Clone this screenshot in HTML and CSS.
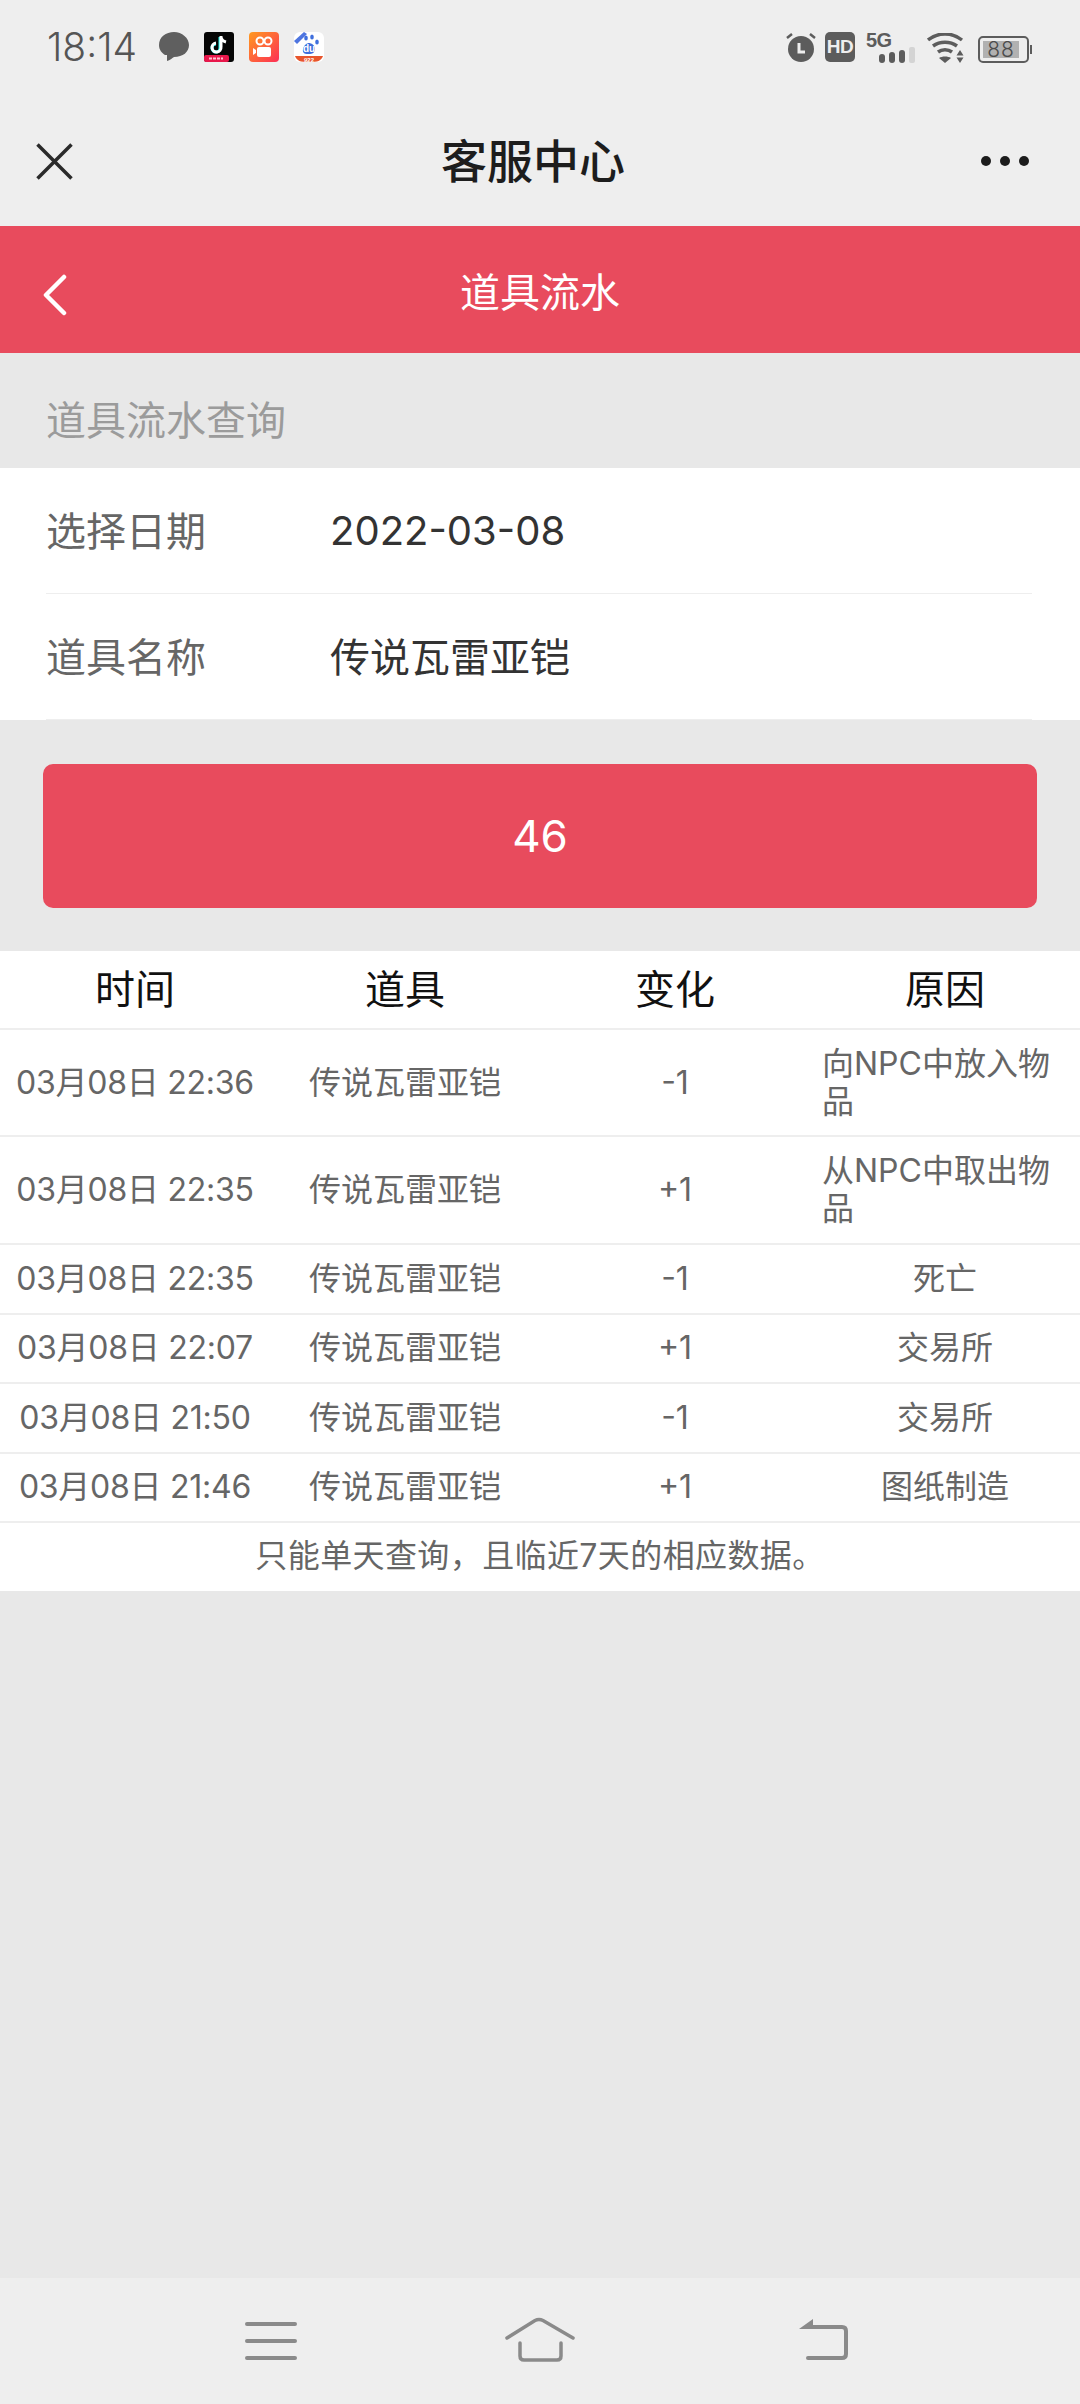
FILE: index.html
```html
<!DOCTYPE html>
<html lang="zh-CN">
<head>
<meta charset="utf-8">
<title>道具流水</title>
<link rel="stylesheet" href="styles.css">
</head>
<body>
<div class="screen">
  <header class="chrome">
    <div class="status">
      <div class="status-left">
        <span class="clock">18:14</span>
        <svg class="n-icon msg" viewBox="0 0 30 30"><path fill="#5f5f5f" d="M15 0C7 0 0 5 0 13c0 5 3 8 6 10l2 0 0 6c3-.5 5-3 7-4 9 0 15-5 15-12S23 0 15 0z"/></svg>
        <svg class="n-icon tiktok" viewBox="0 0 30 30"><rect width="30" height="30" rx="3" fill="#050505"/><rect y="23" width="25" height="7" rx="2" fill="#e8174b"/><path fill="none" stroke="#25f4ee" stroke-width="3" d="M16 5v11a4 4 0 1 1-4-4"/><path fill="none" stroke="#fff" stroke-width="3" d="M17 4v11a4.500 4.500 0 1 1-5-4M17 5c.5 3 3 4.500 5 5"/><path d="M5 26.500h14" stroke="#ffc2cf" stroke-width="2" stroke-dasharray="3 1"/></svg>
        <svg class="n-icon kuaishou" viewBox="0 0 30 30"><defs><linearGradient id="ks" x1="0" y1="0" x2="1" y2="1"><stop offset="0" stop-color="#ff9a1f"/><stop offset="1" stop-color="#fd2f55"/></linearGradient></defs><rect width="30" height="30" rx="4" fill="url(#ks)"/><circle cx="11" cy="9" r="3.500" fill="none" stroke="#fff" stroke-width="2"/><circle cx="19" cy="9" r="3.500" fill="none" stroke="#fff" stroke-width="2"/><rect x="8" y="15" width="14" height="10" rx="2" fill="#fff"/><path d="M7 18l-3-2v7l3-2z" fill="#fff"/></svg>
        <svg class="n-icon baidu" viewBox="0 0 30 30"><rect width="30" height="30" rx="6" fill="#fff"/><path d="M0 9L10 0 13 2 3 12z" fill="#4e75e0"/><g fill="#3f6fdd"><ellipse cx="12" cy="6" rx="1.800" ry="2.500"/><ellipse cx="18" cy="5" rx="1.800" ry="2.500"/><ellipse cx="23" cy="10" rx="1.800" ry="2.500"/><path d="M9 17c1-4 4-6 6-6s6 2 6 6-3 5-6 5-7 0-6-5z"/></g><text class="baidu-du" x="15" y="20">du</text><path d="M1 24h28c-2 5-5 6-14 6S3 29 1 24z" fill="#e8552c"/><text class="baidu-tag" x="15" y="29.500">922</text></svg>
      </div>
      <div class="status-right">
        <svg class="s-alarm" viewBox="0 0 30 30"><circle cx="15" cy="17" r="13" fill="#5c5c5c"/><path d="M1 6l5-4M29 6l-5-4" stroke="#5c5c5c" stroke-width="2.500"/><path d="M13 11v9h6" fill="none" stroke="#eee" stroke-width="3"/></svg>
        <span class="s-hd">HD</span>
        <div class="s-signal">
          <span class="s-5g">5G</span>
          <div class="bars"><i class="bar on b1"></i><i class="bar on b2"></i><i class="bar on b3"></i><i class="bar b4"></i></div>
        </div>
        <svg class="s-wifi" viewBox="0 0 38 30"><g fill="none" stroke="#5c5c5c" stroke-width="3.500"><path d="M1 7c10-8 24-8 34 0"/><path d="M6 13c7-5 17-5 24 0"/><path d="M11 19c4-3 10-3 14 0"/></g><path d="M18 30l-6-5c3-2 9-2 12 0z" fill="#5c5c5c"/><path d="M33 17l3.500 5.500h-7zM33 30l3.500-5.500h-7z" fill="#5c5c5c"/></svg>
        <div class="s-batt"><div class="batt-body"><span class="batt-fill">88</span></div><i class="batt-tip"></i></div>
      </div>
    </div>
    <div class="wx-nav">
      <svg class="wx-close" viewBox="0 0 37 37"><path d="M1.500 1.500l34 34M35.500 1.500l-34 34" fill="none" stroke="#2a2a2a" stroke-width="3.500"/></svg>
      <h1 class="wx-title">客服中心</h1>
      <div class="wx-more"><i></i><i></i><i></i></div>
    </div>
  </header>

  <section class="app-bar">
    <svg class="back" viewBox="0 0 24 42"><path d="M21 3L3 21l18 18" fill="none" stroke="#fff" stroke-width="4.500" stroke-linecap="round" stroke-linejoin="round"/></svg>
    <h2 class="app-title">道具流水</h2>
  </section>

  <main class="content">
    <div class="sec-title">道具流水查询</div>
    <div class="form">
      <div class="field"><span class="f-label">选择日期</span><span class="f-value">2022-03-08</span></div>
      <div class="field"><span class="f-label">道具名称</span><span class="f-value f-cjk">传说瓦雷亚铠</span></div>
    </div>
    <div class="btn-wrap"><button class="count-btn">46</button></div>

    <div class="table">
      <div class="row head"><span>时间</span><span>道具</span><span>变化</span><span>原因</span></div>
      <div class="row tall first"><span class="time">03月08日 22:36</span><span>传说瓦雷亚铠</span><span>-1</span><span class="reason">向NPC中放入物品</span></div>
      <div class="row tall"><span class="time">03月08日 22:35</span><span>传说瓦雷亚铠</span><span>+1</span><span class="reason">从NPC中取出物品</span></div>
      <div class="row"><span class="time">03月08日 22:35</span><span>传说瓦雷亚铠</span><span>-1</span><span>死亡</span></div>
      <div class="row"><span class="time">03月08日 22:07</span><span>传说瓦雷亚铠</span><span>+1</span><span>交易所</span></div>
      <div class="row"><span class="time">03月08日 21:50</span><span>传说瓦雷亚铠</span><span>-1</span><span>交易所</span></div>
      <div class="row"><span class="time">03月08日 21:46</span><span>传说瓦雷亚铠</span><span>+1</span><span>图纸制造</span></div>
      <div class="note">只能单天查询，且临近7天的相应数据。</div>
    </div>
  </main>

  <footer class="sys-nav">
    <svg class="sn-menu" viewBox="0 0 52 46"><path d="M2 6h48M2 23h48M2 40h48" stroke="#8a8a8a" stroke-width="4" stroke-linecap="round"/></svg>
    <svg class="sn-home" viewBox="0 0 72 46"><path d="M3 21L31 3.500q4-2 8 0L69 21" fill="none" stroke="#8a8a8a" stroke-width="3.500" stroke-linecap="round"/><path d="M16 26v13q0 4 4 4h33q4 0 4-4V26" fill="none" stroke="#8a8a8a" stroke-width="3.500" stroke-linecap="round"/></svg>
    <svg class="sn-back" viewBox="0 0 52 46"><path d="M14 11h31q4 0 4 4v23q0 4-4 4H11" fill="none" stroke="#8a8a8a" stroke-width="4" stroke-linecap="round"/><path d="M16 3v10H2z" fill="#8a8a8a"/></svg>
  </footer>
</div>
</body>
</html>
```

FILE: styles.css
```css
* { box-sizing: border-box; }
html, body { margin: 0; padding: 0; }
body { font-family: Inter, "Noto Sans CJK SC", sans-serif; background: #e8e8e8; }
.screen { width: 1080px; height: 2404px; display: flex; flex-direction: column; overflow: hidden; }

.chrome { height: 226px; background: #eeeeee; flex: none; }
.status { height: 92px; padding: 0 0 0 47px; display: flex; justify-content: space-between; align-items: flex-start; }
.status-left { display: flex; align-items: center; height: 30px; margin-top: 32px; }
.clock { font-size: 39px; font-weight: 300; color: #555; width: 112px; line-height: 30px; }
.n-icon { width: 30px; height: 30px; display: block; margin-right: 15px; }
.baidu-du { font: bold 10px "Liberation Sans", sans-serif; fill: #fff; text-anchor: middle; }
.baidu-tag { font: bold 6px "Liberation Sans", sans-serif; fill: #fff; text-anchor: middle; }
.status-right { display: flex; align-items: flex-start; margin-top: 32px; padding-right: 48px; }
.s-alarm { width: 30px; height: 30px; display: block; margin-right: 9px; }
.s-hd { width: 30px; height: 30px; background: #5c5c5c; color: #eee; border-radius: 5px; font: bold 19px/30px "Liberation Sans", sans-serif; text-align: center; margin-right: 11px; letter-spacing: -.5px; }
.s-signal { width: 48px; height: 31px; position: relative; margin-right: 13px; }
.s-5g { font: bold 20px/17px "Liberation Sans", sans-serif; color: #5c5c5c; display: block; letter-spacing: -.5px; }
.bars { position: absolute; left: 13px; bottom: 0; display: flex; gap: 4px; align-items: flex-end; }
.bar { width: 6px; background: #5c5c5c; border-radius: 3px; }
.bar.b4 { background: #d4d4d4; height: 16px; border-radius: 2px; }
.b1 { height: 9px; } .b2 { height: 11px; } .b3 { height: 13px; }
.s-wifi { width: 38px; height: 30px; display: block; margin-right: 13px; margin-top: 1px; }
.s-batt { display: flex; align-items: center; height: 27px; margin-top: 4px; }
.batt-body { width: 51px; height: 27px; border: 2px solid #5c5c5c; border-radius: 5px; padding: 3px 8px 3px 3px; }
.batt-fill { display: block; height: 17px; width: 36px; background: #b1b1b1; color: #4c4c4c; font-size: 21px; font-weight: 300; line-height: 18px; text-align: center; letter-spacing: 1px; }
.batt-tip { width: 2px; height: 9px; background: #5c5c5c; margin-left: 1px; }

.wx-nav { height: 134px; display: flex; align-items: flex-start; justify-content: center; position: relative; }
.wx-close { position: absolute; left: 36px; top: 51px; width: 37px; height: 37px; }
.wx-title { margin: 38px 14px 0 0; font-size: 46px; font-weight: 500; line-height: 62px; color: #1d1d1d; }
.wx-more { position: absolute; left: 981px; top: 64px; display: flex; gap: 9px; }
.wx-more i { width: 10px; height: 10px; border-radius: 50%; background: #1c1c1c; }

.app-bar { height: 127px; background: #e84b5d; flex: none; position: relative; display: flex; justify-content: center; align-items: flex-start; }
.back { position: absolute; left: 43px; top: 48px; width: 24px; height: 42px; }
.app-title { margin: 39px 0 0; font-size: 40px; font-weight: 400; line-height: 56px; color: #fff; }

.content { flex: 1; background: #e8e8e8; }
.sec-title { height: 115px; padding: 40px 0 0 46px; font-size: 40px; line-height: 56px; color: #9b9b9b; }
.form { background: #fff; padding: 0 48px 0 46px; }
.field { height: 126px; border-bottom: 1px solid #eeeeee; display: flex; align-items: center; font-size: 40px; }
.f-label { width: 284px; color: #666; margin-bottom: 4px; }
.f-value { color: #333; }
.f-cjk { margin-bottom: 4px; }
.btn-wrap { padding: 44px 43px 43px; }
.count-btn { display: block; width: 100%; height: 144px; border: 0; border-radius: 10px; background: #e84b5d; color: #fff; font: 400 44px Inter, "Noto Sans CJK SC", sans-serif; }

.table { background: #fff; }
.row { display: grid; grid-template-columns: repeat(4, 270px); height: 69.5px; border-bottom: 2px solid #eeeeee; align-items: center; text-align: center; font-size: 32px; line-height: 38px; color: #666; }
.row > span { display: block; padding: 0 12px; }
.row > .time { padding: 0; white-space: nowrap; letter-spacing: -.25px; }
.row.head { height: 79px; font-size: 40px; color: #111; }
.row.tall { height: 108px; }
.row.tall.first { height: 107px; }
.reason { text-align: left; }
.note { height: 67.5px; line-height: 66px; text-align: center; font-size: 32px; color: #666; letter-spacing: .4px; }

.sys-nav { height: 126px; flex: none; background: #eeeeee; position: relative; display: flex; }
.sn-menu { position: absolute; left: 245px; top: 40px; width: 52px; height: 46px; }
.sn-home { position: absolute; left: 504px; top: 39px; width: 72px; height: 46px; }
.sn-back { position: absolute; left: 797px; top: 38px; width: 52px; height: 46px; }
```
